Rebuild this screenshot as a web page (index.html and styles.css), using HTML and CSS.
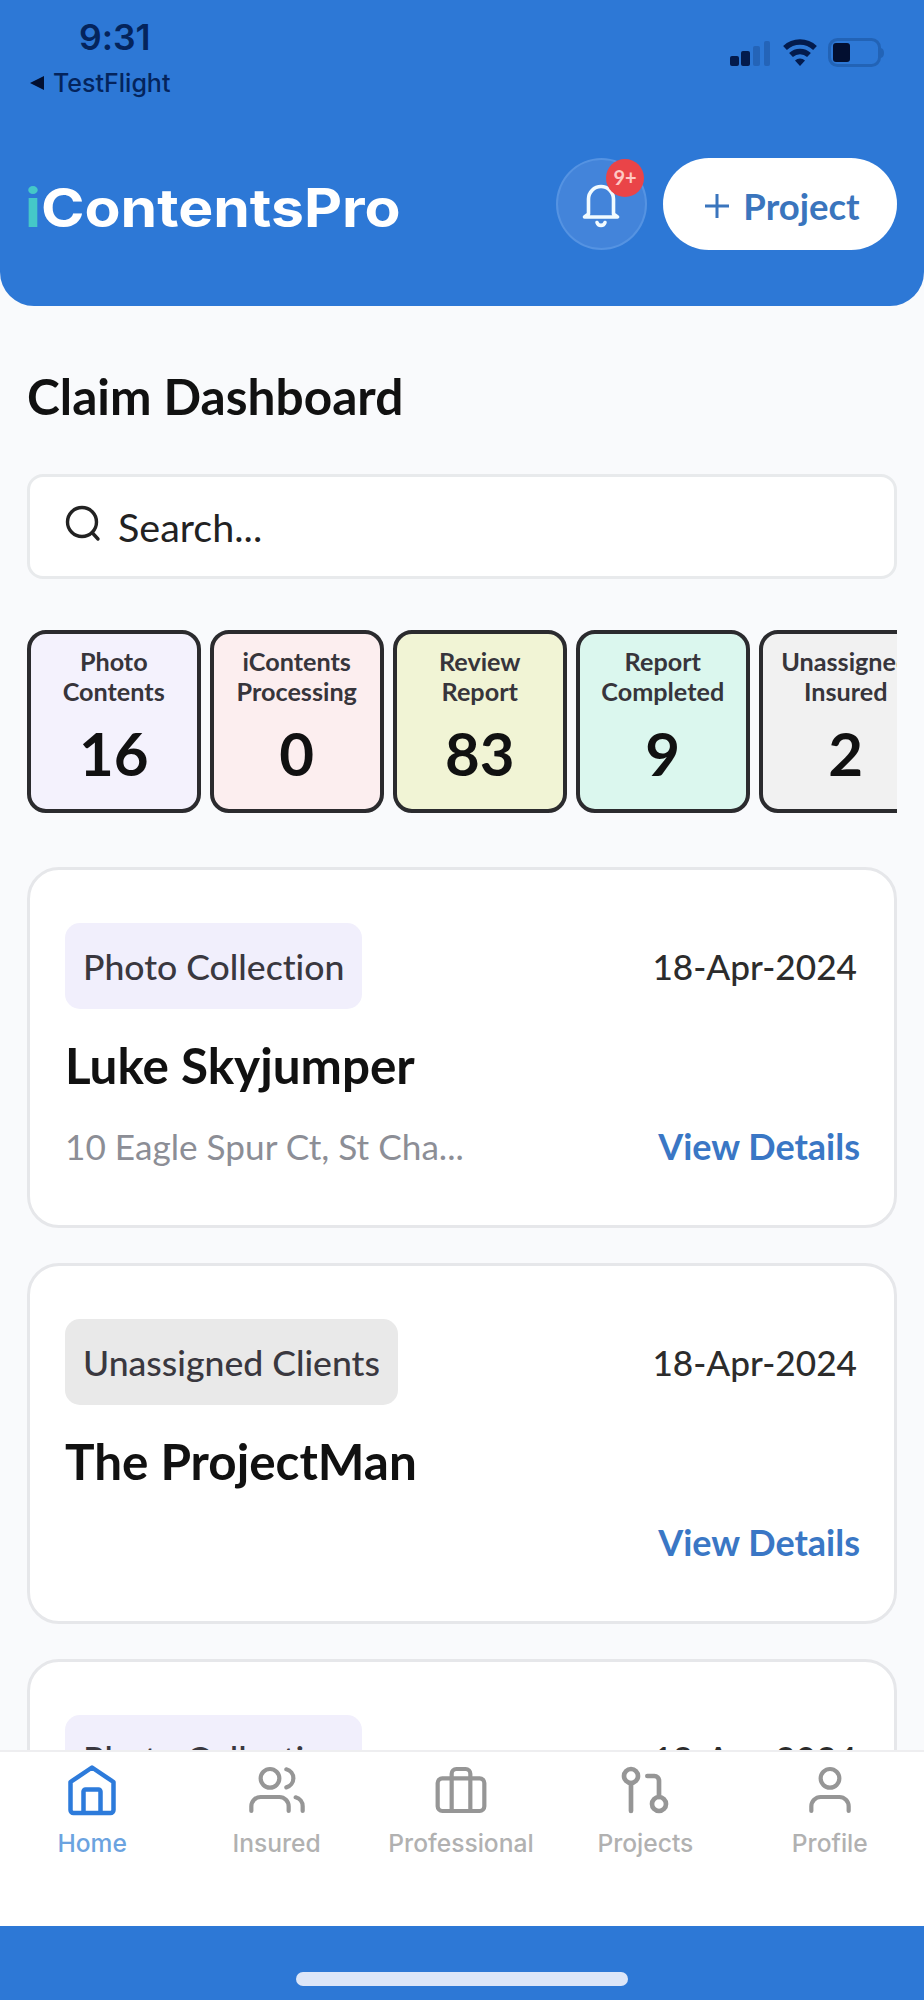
FILE: index.html
```html
<!DOCTYPE html>
<html lang="en">
<head>
<meta charset="utf-8">
<title>iContentsPro</title>
<link rel="stylesheet" href="styles.css">
</head>
<body>
<div class="app">
  <header class="header">
    <div class="status">
      <div class="status-left">
        <div class="time">9:31</div>
        <div class="back">
          <svg width="16" height="16" viewBox="0 0 16 16"><path d="M1 8 15 1v14z" fill="currentColor"/></svg>
          <span>TestFlight</span>
        </div>
      </div>
      <div class="status-right">
        <svg width="42" height="30" viewBox="0 0 42 30">
          <rect x="0" y="18" width="9" height="10" rx="2" fill="#031b4d"/>
          <rect x="11" y="13" width="9" height="15" rx="2" fill="#031b4d"/>
          <rect x="23" y="8" width="7" height="20" rx="2" fill="#2464b8"/>
          <rect x="34" y="3" width="6" height="25" rx="2" fill="#2464b8"/>
        </svg>
        <svg class="wifi" width="36" height="30" viewBox="0 0 36 30" fill="none" stroke="#031b4d" stroke-width="5.500">
          <path d="M3 10a22 22 0 0 1 30 0"/>
          <path d="M9 17a13 13 0 0 1 18 0"/>
          <path d="M18 28l-5-5.500a7.500 7.500 0 0 1 10 0z" fill="#031b4d" stroke="none"/>
        </svg>
        <svg width="58" height="30" viewBox="0 0 58 30">
          <rect x="1.500" y="1.500" width="50" height="26" rx="8" fill="none" stroke="#2263b6" stroke-width="3"/>
          <rect x="5" y="5" width="17" height="19" rx="3" fill="#020f30"/>
          <path d="M53 10c4 1 4 9 0 10z" fill="#2263b6"/>
        </svg>
      </div>
    </div>
    <div class="topbar">
      <div class="logo"><span class="logo-i">i</span>ContentsPro</div>
      <div class="actions">
        <div class="bell">
          <svg width="38" height="46" viewBox="0 0 38 46" fill="none" stroke="#f2fbff" stroke-width="3.600" stroke-linejoin="round" stroke-linecap="round">
            <path d="M6.500 31V16a12.500 12.500 0 0 1 25 0v15l4 3H2.500z"/>
            <path d="M15 39.500a4.200 4.200 0 0 0 8 0"/>
          </svg>
          <span class="badge">9+</span>
        </div>
        <div class="project">
          <svg width="24" height="26" viewBox="0 0 24 26" stroke="currentColor" stroke-width="3"><path d="M12 1v24M0 13h24"/></svg>
          <span>Project</span>
        </div>
      </div>
    </div>
  </header>

  <main class="main">
    <h1 class="title">Claim Dashboard</h1>
    <div class="search">
      <svg width="38" height="38" viewBox="0 0 38 38" fill="none" stroke="#222" stroke-width="3.400" stroke-linecap="round"><circle cx="17" cy="17" r="14.500"/><path d="M27.500 28l5.500 6"/></svg>
      <span>Search...</span>
    </div>
    <div class="stats">
      <div class="stat lilac"><div class="stat-label">Photo<br>Contents</div><div class="stat-num">16</div></div>
      <div class="stat pink"><div class="stat-label">iContents<br>Processing</div><div class="stat-num">0</div></div>
      <div class="stat yellow"><div class="stat-label">Review<br>Report</div><div class="stat-num">83</div></div>
      <div class="stat mint"><div class="stat-label">Report<br>Completed</div><div class="stat-num">9</div></div>
      <div class="stat gray"><div class="stat-label">Unassigned<br>Insured</div><div class="stat-num">2</div></div>
    </div>
    <div class="cards">
      <article class="card">
        <div class="row"><span class="tag tag-lilac">Photo Collection</span><span class="date">18-Apr-2024</span></div>
        <h2 class="name">Luke Skyjumper</h2>
        <div class="row foot"><span class="address">10 Eagle Spur Ct, St Cha...</span><a class="link">View Details</a></div>
      </article>
      <article class="card">
        <div class="row"><span class="tag tag-gray">Unassigned Clients</span><span class="date">18-Apr-2024</span></div>
        <h2 class="name">The ProjectMan</h2>
        <div class="row foot"><span class="address"></span><a class="link">View Details</a></div>
      </article>
      <article class="card">
        <div class="row"><span class="tag tag-lilac">Photo Collection</span><span class="date">18-Apr-2024</span></div>
      </article>
    </div>
  </main>

  <nav class="nav">
    <div class="tab active">
      <svg width="56" height="56" viewBox="0 0 56 56" fill="none" stroke="currentColor" stroke-width="4.500" stroke-linejoin="round"><path d="M6.500 20 28 5.500 49.500 20v28a3 3 0 0 1-3 3h-37a3 3 0 0 1-3-3z"/><path d="M19.500 51V29.500a2 2 0 0 1 2-2h13a2 2 0 0 1 2 2V51"/></svg>
      <span>Home</span>
    </div>
    <div class="tab">
      <svg width="56" height="56" viewBox="0 0 24 24" fill="none" stroke="currentColor" stroke-width="1.800" stroke-linecap="round"><path d="M17 21v-2a4 4 0 0 0-4-4H5a4 4 0 0 0-4 4v2"/><circle cx="9" cy="7" r="4"/><path d="M23 21v-2a4 4 0 0 0-3-3.870M16 3.130a4 4 0 0 1 0 7.750"/></svg>
      <span>Insured</span>
    </div>
    <div class="tab">
      <svg width="56" height="56" viewBox="0 0 24 24" fill="none" stroke="currentColor" stroke-width="1.800"><rect x="2" y="7" width="20" height="14" rx="2"/><path d="M16 21V5a2 2 0 0 0-2-2h-4a2 2 0 0 0-2 2v16"/></svg>
      <span>Professional</span>
    </div>
    <div class="tab">
      <svg width="56" height="56" viewBox="0 0 24 24" fill="none" stroke="currentColor" stroke-width="2" stroke-linecap="round"><circle cx="18" cy="18" r="3"/><circle cx="6" cy="6" r="3"/><path d="M13 6h3a2 2 0 0 1 2 2v7M6 9v12"/></svg>
      <span>Projects</span>
    </div>
    <div class="tab">
      <svg width="56" height="56" viewBox="0 0 24 24" fill="none" stroke="currentColor" stroke-width="1.800" stroke-linecap="round"><path d="M20 21v-2a4 4 0 0 0-4-4H8a4 4 0 0 0-4 4v2"/><circle cx="12" cy="7" r="4"/></svg>
      <span>Profile</span>
    </div>
  </nav>
  <div class="home-bar"><div class="indicator"></div></div>
</div>
</body>
</html>
```
FILE: styles.css
```css
* { box-sizing: border-box; }
body { margin: 0; font-family: Lato, "Liberation Sans", sans-serif; color: #111; font-variant-ligatures: none; }
.app { width: 924px; height: 2000px; display: flex; flex-direction: column; overflow: hidden; background: #f9fafc; }

.header { flex: none; height: 306px; background: #2d78d6; border-radius: 0 0 34px 34px; }
.status { height: 158px; display: flex; justify-content: space-between; font-family: Inter, sans-serif; color: #04245c; }
.status-left { padding: 16px 0 0 29px; }
.time { padding-left: 50px; height: 44px; line-height: 44px; font-size: 35.500px; font-weight: 600; }
.back { margin-top: 8px; height: 30px; display: flex; align-items: center; gap: 8px; line-height: 30px; font-size: 25px; font-weight: 500; }
.back svg { color: #020f30; }
.status-right { display: flex; padding: 38px 38px 0 0; }
.wifi { margin: 0 10px 0 10px; }
.topbar { height: 92px; padding: 0 27px 0 25px; display: flex; justify-content: space-between; }
.logo { padding-top: 4px; line-height: 92px; font-family: Inter, sans-serif; font-size: 53px; font-weight: 700; color: #fff; transform: scaleX(1.11); transform-origin: left; }
.logo-i { color: #45c8c8; }
.actions { display: flex; gap: 16px; }
.bell { position: relative; width: 91px; height: 92px; border-radius: 50%; background: #4384da; border: 2px solid #5593e2; display: flex; align-items: center; justify-content: center; }
.bell svg { margin: 4px 2px 0 0; }
.badge { position: absolute; left: 48px; top: -1px; width: 38px; height: 38px; border-radius: 50%; background: #ea4448; color: #ffc9c4; font-size: 20px; font-weight: 700; line-height: 37px; text-align: center; }
.project { width: 234px; height: 92px; border-radius: 46px; background: #fff; color: #3a75bd; display: flex; align-items: center; justify-content: center; gap: 14px; font-size: 36.500px; font-weight: 700; padding: 3px 0 0 5px; }

.main { flex: 1; min-height: 0; overflow: hidden; padding: 60px 27px 0 27px; }
.title { margin: 0; font-size: 49.600px; line-height: 60px; font-weight: 700; }
.search { margin-top: 48px; height: 105px; border: 3px solid #e8eaec; border-radius: 16px; background: #fff; padding-left: 35px; display: flex; align-items: center; gap: 15px; font-size: 39.500px; color: #222; }
.search svg { margin-top: -6px; }
.search span { margin-top: -1px; }
.stats { margin-top: 51px; display: flex; gap: 9.500px; overflow: hidden; }
.stat { flex: none; width: 173.500px; height: 183px; padding-top: 12px; border: 4px solid #2b2b2e; border-radius: 19px; text-align: center; display: flex; flex-direction: column; align-items: center; }
.stat-label { font-size: 25.200px; line-height: 30px; font-weight: 700; color: #37353b; }
.stat-num { margin-top: 12px; font-size: 60px; line-height: 70px; font-weight: 700; }
.lilac { background: #f4f2fd; }
.pink { background: #fceeef; }
.yellow { background: #f1f4d5; }
.mint { background: #dbf7ee; }
.gray { background: #f1f1f1; }
.cards { margin-top: 54px; display: flex; flex-direction: column; gap: 35px; }
.card { flex: none; height: 361px; padding: 53px 34px 0 35px; border: 3px solid #e6e7ea; border-radius: 32px; background: #fff; }
.row { display: flex; justify-content: space-between; align-items: center; font-size: 36px; }
.tag { height: 86px; line-height: 88px; padding: 0 18px; border-radius: 15px; color: #3a383f; font-size: 35.600px; font-weight: 500; }
.tag-lilac { background: #f1effc; }
.tag-gray { background: #e9e9e9; }
.date { padding-right: 3px; color: #2c2c2c; font-size: 35.200px; font-weight: 500; }
.name { margin: 26px 0 0; font-size: 49.400px; line-height: 61px; font-weight: 700; }
.foot { margin-top: 28px; line-height: 44px; }
.address { color: #8c8e96; font-size: 35.200px; }
.link { color: #3a77c5; font-weight: 700; }

.nav { flex: none; height: 176px; padding-right: 2px; border-top: 2px solid #eeeef0; background: #fff; display: grid; grid-template-columns: repeat(5, 1fr); }
.tab { padding-top: 10px; display: flex; flex-direction: column; align-items: center; color: #969696; font-family: Inter, sans-serif; font-size: 24.600px; line-height: 30px; }
.tab span { margin-top: 10px; color: #b1b1b1; font-weight: 500; }
.tab.active { color: #2d7bdb; }
.tab.active span { color: #6ba3e0; }
.home-bar { flex: none; height: 74px; background: #2d78d6; display: flex; justify-content: center; padding-top: 46px; }
.indicator { width: 332px; height: 14px; border-radius: 7px; background: #dce6f8; }
```
